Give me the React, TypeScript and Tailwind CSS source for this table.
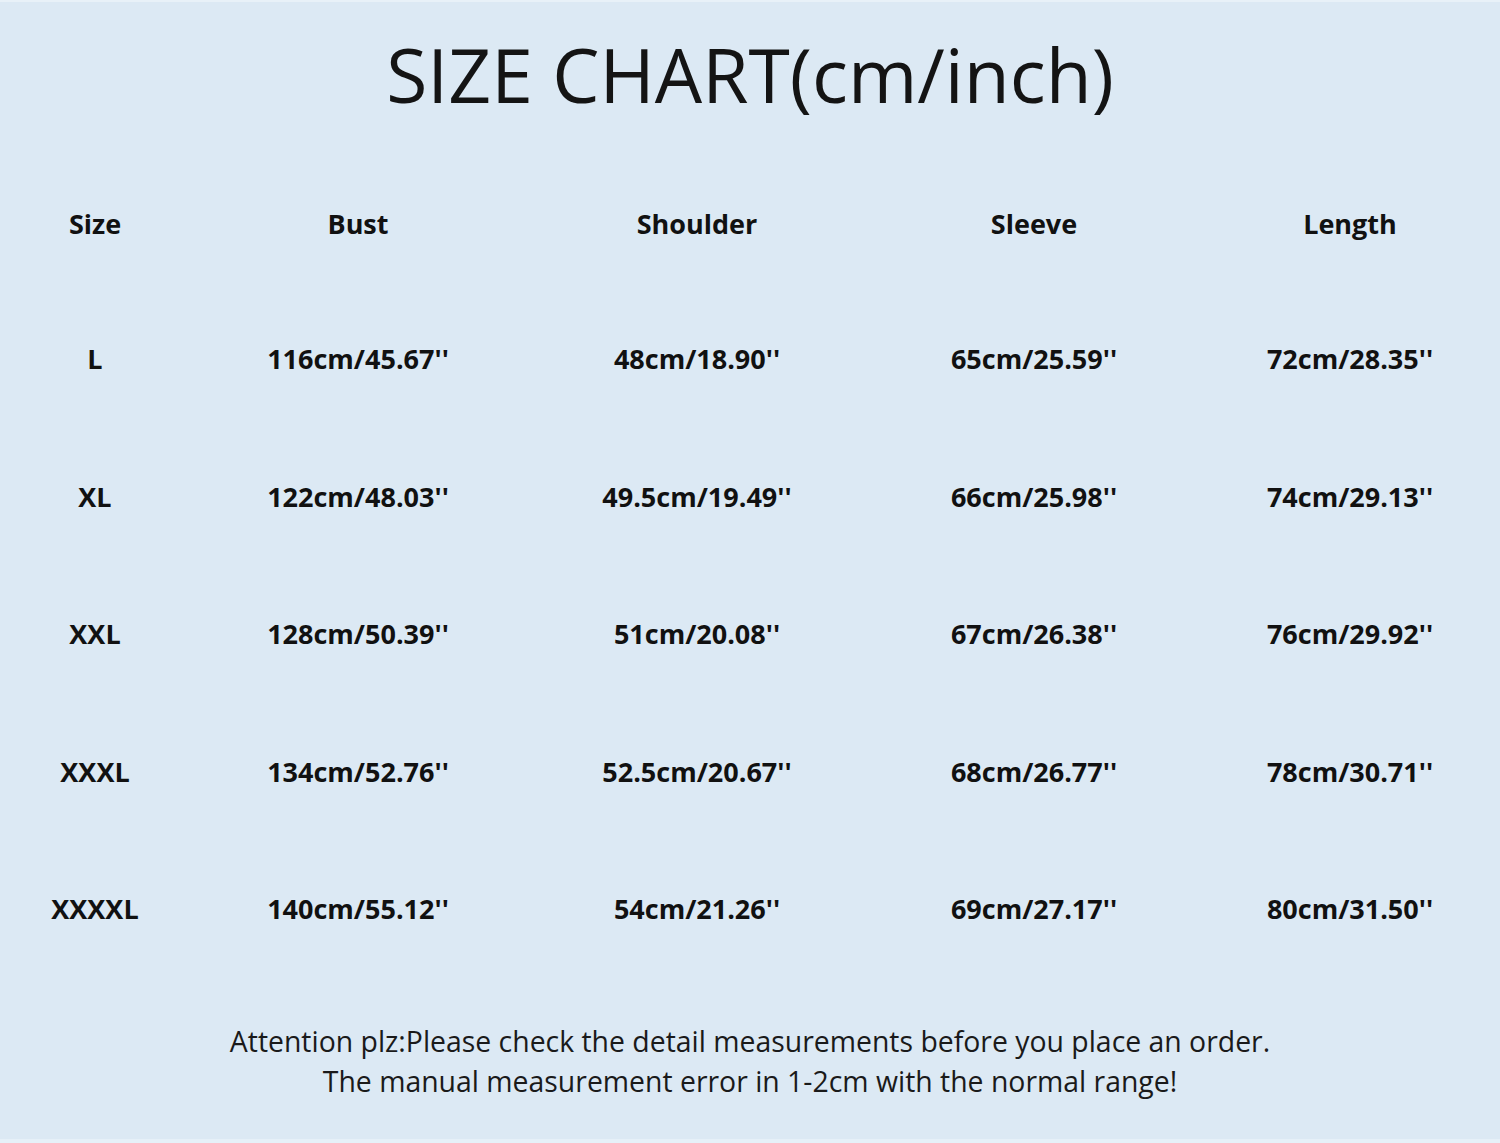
const rows = [
  ['L', '116cm/45.67\'\'', '48cm/18.90\'\'', '65cm/25.59\'\'', '72cm/28.35\'\''],
  ['XL', '122cm/48.03\'\'', '49.5cm/19.49\'\'', '66cm/25.98\'\'', '74cm/29.13\'\''],
  ['XXL', '128cm/50.39\'\'', '51cm/20.08\'\'', '67cm/26.38\'\'', '76cm/29.92\'\''],
  ['XXXL', '134cm/52.76\'\'', '52.5cm/20.67\'\'', '68cm/26.77\'\'', '78cm/30.71\'\''],
  ['XXXXL', '140cm/55.12\'\'', '54cm/21.26\'\'', '69cm/27.17\'\'', '80cm/31.50\'\''],
];

const headers = ['Size', 'Bust', 'Shoulder', 'Sleeve', 'Length'];

export default function App() {
  return (
    <div className="w-[1500px] h-[1143px] bg-[#dce9f4] border-t-2 border-t-[#e8f1f8] border-b-4 border-b-[#e6f0f8] flex flex-col items-center">
      <h1 className="mt-[24px] h-[96px] text-[75px] leading-[96px] text-[#141414] font-['Open_Sans',sans-serif] font-normal">
        SIZE CHART(cm/inch)
      </h1>

      <div className="mt-[85px] w-full grid grid-cols-[190px_336px_342px_332px_1fr] font-['Open_Sans',sans-serif] font-bold text-[27px] text-[#111111]">
        {headers.map((h) => (
          <div key={h} className="h-[34px] leading-[34px] text-center">{h}</div>
        ))}
      </div>

      <div className="w-full flex flex-col mt-[101px] gap-[103.5px] font-['Open_Sans',sans-serif] font-bold text-[27px] text-[#111111]">
        {rows.map((r) => (
          <div key={r[0]} className="grid grid-cols-[190px_336px_342px_332px_1fr] h-[34px] leading-[34px]">
            {r.map((c, i) => (
              <div key={i} className="text-center">{c}</div>
            ))}
          </div>
        ))}
      </div>

      <div className="mt-[95px] text-center font-['Open_Sans',sans-serif] text-[28.4px] leading-[40px] text-[#1a1a1a]">
        <p>Attention plz:Please check the detail measurements before you place an order.</p>
        <p>The manual measurement error in 1-2cm with the normal range!</p>
      </div>
    </div>
  );
}
